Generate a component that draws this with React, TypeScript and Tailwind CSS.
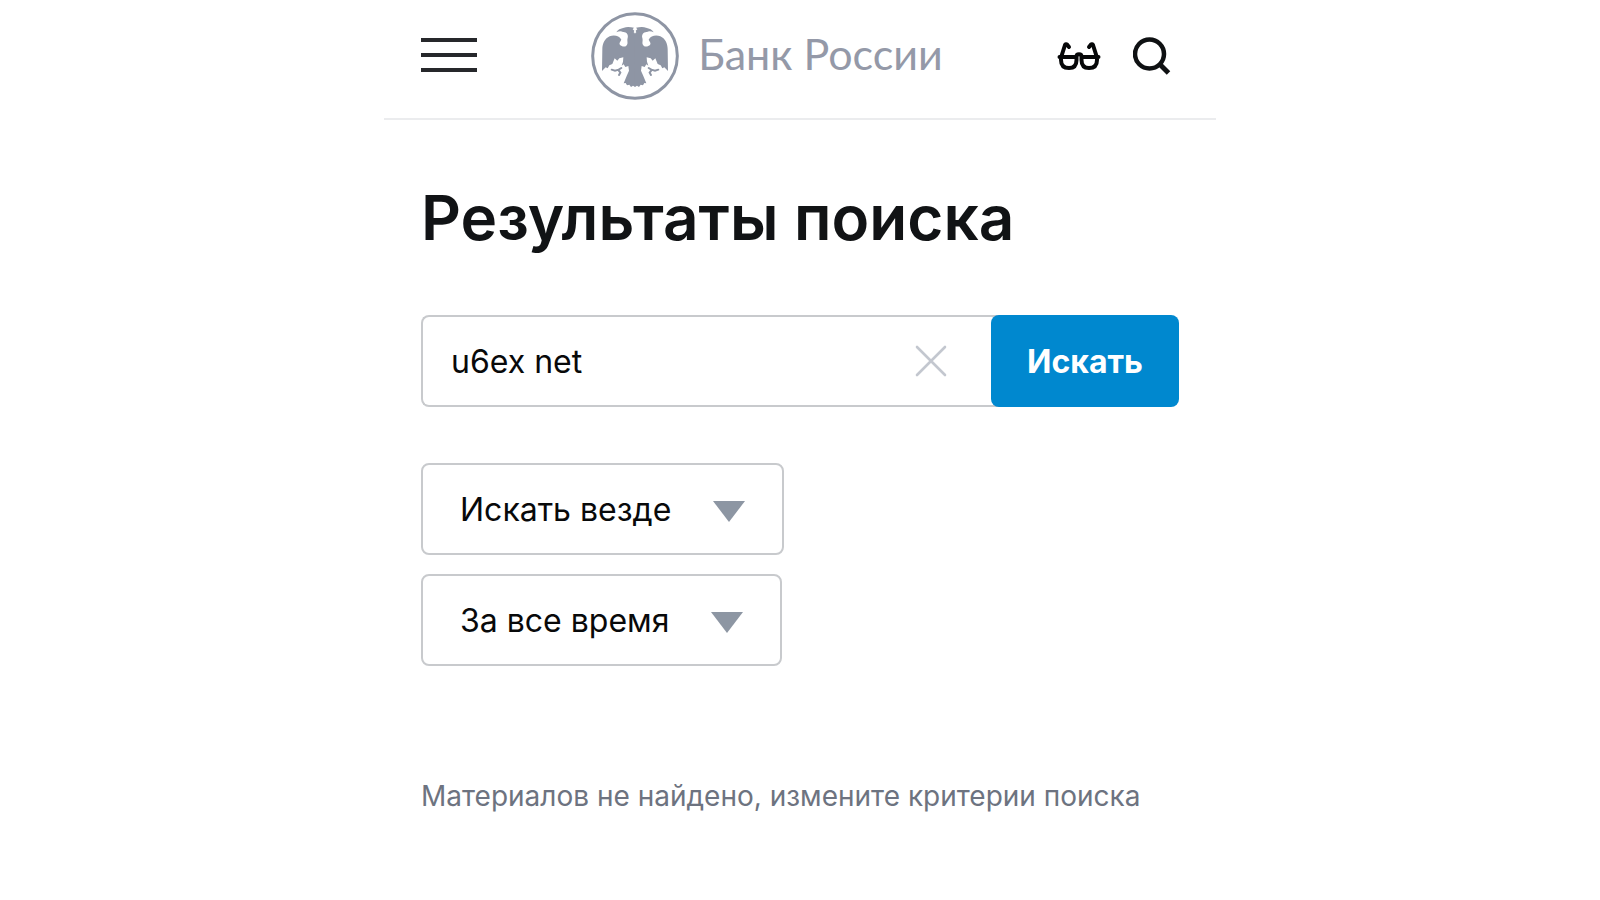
import React from "react";

const WING =
  "M166 104 L164 98 L161 96 L163 91 L158 87 L162 82 C152 80 139 79 132 82 C122 84 112 88 109 96 C116 92 124 91 129 95 C139 94 146 103 143 113 C140 122 146 129 139 136 C134 141 124 138 120 134 C116 129 121 124 124 118 C118 106 102 103 89 108 C75 114 67 130 67 146 L66 212 L77 201 L83 204 L88 195 L97 191 L104 174 L112 181 L118 174 L130 171 L129 184 L125 196 L131 192 L136 200 L145 197 L147 211 L140 227 L131 249 L137 248 L141 255 L148 253 L153 260 L159 256 L166 260 Z";
const TALON = "M95 208 L105 211 L116 208 L124 203 M116 210 L121 217 L117 224";

function EagleEmblem() {
  return (
    <svg viewBox="33 35 264 264" className="size-[88px] shrink-0 text-[#8e95a4]" aria-hidden="true">
      <circle cx="165" cy="167" r="127" fill="none" stroke="currentColor" strokeWidth="9" />
      <path d={WING} fill="currentColor" />
      <path d={TALON} fill="none" stroke="currentColor" strokeWidth="6" strokeLinecap="round" />
      <g transform="translate(330 0) scale(-1 1)">
        <path d={WING} fill="currentColor" />
        <path d={TALON} fill="none" stroke="currentColor" strokeWidth="6" strokeLinecap="round" />
      </g>
    </svg>
  );
}

function GlassesIcon() {
  return (
    <svg viewBox="0 0 44 30" className="h-[30px] w-11" fill="none" stroke="#060708" strokeWidth="4" strokeLinecap="round" strokeLinejoin="round" aria-hidden="true">
      <path d="M2.5 16H19 M25 16H41.5 M4 16V19C4 24.500 7 27 12 27C16.500 27 19.500 24.500 19.500 19V15.500C19.500 12.500 24.500 12.500 24.500 15.500V19C24.500 24.500 27.500 27 32 27C37 27 40 24.500 40 19V16" />
      <path d="M4.500 15L8 4C8.500 3 9.500 3 10 3.500L12 6 M39.500 15L36 4C35.500 3 34.500 3 34 3.500L32 6" />
    </svg>
  );
}

function FilterSelect({ label, value }: { label: string; value: string }) {
  return (
    <div className="grid w-fit items-center">
      <select aria-label={label} className="col-start-1 row-start-1 h-[92px] appearance-none rounded-lg border-2 border-[#c8cacd] bg-white pt-0.5 pr-[110px] pl-[37px] text-[32px] text-[#08090a] outline-none">
        <option>{value}</option>
      </select>
      <svg viewBox="0 0 32 21" className="pointer-events-none col-start-1 row-start-1 mt-1 mr-[39px] h-[21px] w-8 justify-self-end" aria-hidden="true">
        <path d="M0 0H32L16 21Z" fill="#8d96a3" />
      </svg>
    </div>
  );
}

export default function App() {
  return (
    <div className="min-h-screen bg-white font-['Inter',sans-serif] text-[#08090a]">
      <div className="mx-auto max-w-[832px]">
        <header className="flex h-[120px] items-center justify-between border-b-2 border-[#ebecee] px-[37px] pb-1.5">
          <button type="button" aria-label="Меню" className="flex w-14 flex-col gap-[11px] pb-0.5">
            <span className="h-1 w-full bg-[#26282b]" />
            <span className="h-1 w-full bg-[#26282b]" />
            <span className="h-1 w-full bg-[#26282b]" />
          </button>
          <a href="#" className="flex items-center gap-[19px] text-[#9499a8]">
            <EagleEmblem />
            <span className="pb-1.5 font-['Lato',sans-serif] text-[43px] leading-none">Банк России</span>
          </a>
          <div className="flex items-center gap-8 pr-2">
            <button type="button" aria-label="Версия для слабовидящих"><GlassesIcon /></button>
            <button type="button" aria-label="Поиск">
              <svg viewBox="0 0 38 38" className="size-[38px]" fill="none" stroke="#0f1113" strokeWidth="4.500" aria-hidden="true">
                <circle cx="16.500" cy="17" r="14.500" />
                <path d="M26 26.500L35.500 36" strokeWidth="5" />
              </svg>
            </button>
          </div>
        </header>
        <main className="px-[37px]">
          <h1 className="pt-[58px] text-[62px] leading-[80px] font-semibold text-[#111315]">Результаты поиска</h1>
          <form className="mt-[57px] flex h-[92px]" onSubmit={(e) => e.preventDefault()}>
            <div className="-mr-2 flex min-w-0 flex-1 items-center rounded-l-lg border-2 border-r-0 border-[#c8cacd] pr-[52px] pl-7">
              <input aria-label="Поисковый запрос" defaultValue="u6ex net" className="min-w-0 flex-1 bg-transparent pt-0.5 text-[32px] outline-none" />
              <button type="button" aria-label="Очистить">
                <svg viewBox="0 0 32 32" className="size-8" stroke="#c3c7cf" strokeWidth="2.6" strokeLinecap="round" aria-hidden="true">
                  <path d="M2 2L30 30M30 2L2 30" />
                </svg>
              </button>
            </div>
            <button type="submit" className="relative w-[188px] rounded-lg bg-[#0088cf] pt-0.5 text-[32px] font-bold text-white">Искать</button>
          </form>
          <div className="mt-14 flex flex-col gap-[19px]">
            <FilterSelect label="Раздел" value="Искать везде" />
            <FilterSelect label="Период" value="За все время" />
          </div>
          <p className="mt-28 text-[28px] leading-9 text-[#6d7380]">Материалов не найдено, измените критерии поиска</p>
        </main>
      </div>
    </div>
  );
}
